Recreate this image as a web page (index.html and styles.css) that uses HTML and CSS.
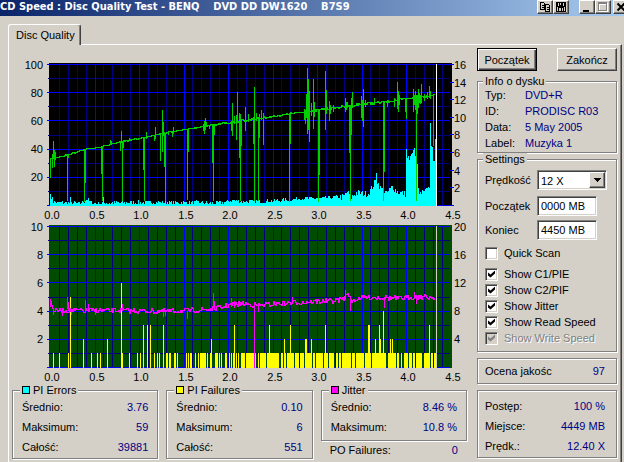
FILE: index.html
```
<!DOCTYPE html>
<html lang="pl">
  <head>
    <meta charset="utf-8">
    <title>CD Speed : Disc Quality Test</title>
    <link rel="stylesheet" href="styles.css">
  </head>
  <body>
    <header class="titlebar">
      <h1 class="title">CD Speed : Disc Quality Test - BENQ    DVD DD DW1620    B7S9</h1>
      <div class="title-buttons">
        <button class="title-button" aria-label="Copy">
          <svg width="12" height="10" viewBox="0 0 12 10" shape-rendering="crispEdges">
            <path d="M1.500 .5h3l1 1v6h-4zM6.500 2.500h3l1 1v6h-4zM3 3.500h2M3 5.500h2M8 5.500h2M8 7.500h2" fill="none" stroke="#000"/>
          </svg>
        </button>
        <button class="title-button" aria-label="Save">
          <svg width="12" height="10" viewBox="0 0 12 10" shape-rendering="crispEdges">
            <path d="M1 0h9l1 1v9H1z"/>
            <path d="M3 1h1v3H3zM8 1h1v3H8zM2 5h1v4H2zM9 5h1v4H9zM4 6h2v3H4zM7 6h1v3H7zM5 1h1v2H5z" fill="#d4d0c8"/>
          </svg>
        </button>
        <button class="title-button window-first" aria-label="Minimize">
          <svg width="12" height="10" viewBox="0 0 12 10" shape-rendering="crispEdges"><path d="M2 8h6v2H2z"/></svg>
        </button>
        <button class="title-button" aria-label="Maximize" disabled>
          <svg width="12" height="10" viewBox="0 0 12 10" shape-rendering="crispEdges">
            <path d="M2.500 1.500h8v8h-8zM2 2.500h9" fill="none" stroke="#fff"/>
            <path d="M1.500 .5h8v8h-8zM1 1.500h9" fill="none" stroke="#808080"/>
          </svg>
        </button>
        <button class="title-button window-close" aria-label="Close">
          <svg width="12" height="10" viewBox="0 0 12 10"><path d="M2.500 1.500l7 7M9.500 1.500l-7 7" stroke="#000" stroke-width="2"/></svg>
        </button>
      </div>
    </header>

    <div class="tabs" role="tablist">
      <button class="tab" role="tab" aria-selected="true">Disc Quality</button>
    </div>

    <main class="panel">
      <section class="results">
        <svg class="chart" id="speed-chart" viewBox="12 58 455 163" role="img" aria-label="PI errors and read speed"></svg>
        <svg class="chart" id="jitter-chart" viewBox="12 221 455 163" role="img" aria-label="PI failures and jitter"></svg>

        <div class="totals">
          <fieldset class="group">
            <legend><i class="swatch errors"></i>PI Errors</legend>
            <dl class="rows">
              <div><dt>Średnio:</dt><dd>3.76</dd></div>
              <div><dt>Maksimum:</dt><dd>59</dd></div>
              <div><dt>Całość:</dt><dd>39881</dd></div>
            </dl>
          </fieldset>
          <fieldset class="group">
            <legend><i class="swatch failures"></i>PI Failures</legend>
            <dl class="rows">
              <div><dt>Średnio:</dt><dd>0.10</dd></div>
              <div><dt>Maksimum:</dt><dd>6</dd></div>
              <div><dt>Całość:</dt><dd>551</dd></div>
            </dl>
          </fieldset>
          <div>
            <fieldset class="group jitter-group">
              <legend><i class="swatch jitter"></i>Jitter</legend>
              <dl class="rows">
                <div><dt>Średnio:</dt><dd>8.46 %</dd></div>
                <div><dt>Maksimum:</dt><dd>10.8 %</dd></div>
              </dl>
            </fieldset>
            <dl class="rows po-failures">
              <div><dt>PO Failures:</dt><dd>0</dd></div>
            </dl>
          </div>
        </div>
      </section>

      <aside class="side">
        <div class="actions">
          <button class="button default">Początek</button>
          <button class="button">Zakończ</button>
        </div>

        <fieldset class="group info">
          <legend>Info o dysku</legend>
          <dl>
            <dt>Typ:</dt><dd>DVD+R</dd>
            <dt>ID:</dt><dd>PRODISC R03</dd>
            <dt>Data:</dt><dd>5 May 2005</dd>
            <dt>Label:</dt><dd>Muzyka 1</dd>
          </dl>
        </fieldset>

        <fieldset class="group settings">
          <legend>Settings</legend>
          <div class="field">
            <label for="speed">Prędkość</label>
            <div class="select">
              <select id="speed"><option>12 X</option></select>
              <span class="arrow"><svg width="7" height="4" viewBox="0 0 7 4" shape-rendering="crispEdges"><path d="M0 0h7v1H0zM1 1h5v1H1zM2 2h3v1H2zM3 3h1v1H3z"/></svg></span>
            </div>
          </div>
          <div class="field">
            <label for="start">Początek</label>
            <input class="text" id="start" type="text" value="0000 MB">
          </div>
          <div class="field">
            <label for="end">Koniec</label>
            <input class="text" id="end" type="text" value="4450 MB">
          </div>
          <label class="check quick"><input type="checkbox">Quick Scan</label>
          <label class="check"><input type="checkbox" checked>Show C1/PIE</label>
          <label class="check"><input type="checkbox" checked>Show C2/PIF</label>
          <label class="check"><input type="checkbox" checked>Show Jitter</label>
          <label class="check"><input type="checkbox" checked>Show Read Speed</label>
          <label class="check disabled"><input type="checkbox" checked disabled>Show Write Speed</label>
        </fieldset>

        <dl class="group rows score">
          <div><dt>Ocena jakośc</dt><dd>97</dd></div>
        </dl>

        <dl class="group rows progress">
          <div><dt>Postęp:</dt><dd>100 %</dd></div>
          <div><dt>Miejsce:</dt><dd>4449 MB</dd></div>
          <div><dt>Prędk.:</dt><dd>12.40 X</dd></div>
        </dl>
      </aside>
    </main>
    <script src="charts.js"></script>
  </body>
</html>
```
FILE: styles.css
```
* {
  box-sizing: border-box;
}

body {
  background: #d4d0c8;
  color: #000;
  display: flex;
  flex-direction: column;
  font-family: "Liberation Sans", Arial, sans-serif;
  font-size: 11px;
  line-height: 16px;
  margin: 0;
  min-height: 100vh;
  overflow-x: hidden;
}

button,
input,
select {
  color: inherit;
  font: inherit;
  margin: 0;
}

dl,
dt,
dd {
  margin: 0;
}

dd {
  color: #000080;
}

/* Title bar */

.titlebar {
  background: linear-gradient(to right, #0a246a, #a6caf0);
  display: flex;
  height: 16px;
  justify-content: space-between;
  overflow: hidden;
}

.title {
  color: #fff;
  font-family: "DejaVu Sans Condensed", "DejaVu Sans", sans-serif;
  font-size: 11px;
  font-weight: bold;
  line-height: 14px;
  margin: 0;
  white-space: pre;
}

.title-buttons {
  display: flex;
  margin-right: -5px;
}

.title-button {
  background: #d4d0c8;
  border: 1px solid;
  border-color: #fff #404040 #404040 #fff;
  box-shadow: inset -1px -1px #808080;
  height: 14px;
  padding: 1px;
  width: 16px;
}

.title-button svg {
  display: block;
}

.window-first {
  margin-left: 10px;
}

.window-close {
  margin-left: 2px;
}

/* Tab and panel */

.tabs {
  margin: 8px 0 0 8px;
}

.tab {
  background: #d4d0c8;
  border: 1px solid #fff;
  border-bottom: none;
  border-radius: 3px 3px 0 0;
  border-right-color: #404040;
  box-shadow: inset -1px 0 #808080;
  display: block;
  height: 21px;
  margin-bottom: -1px;
  padding: 0 5px 0 7px;
  position: relative;
}

.panel {
  border-left: 1px solid #fff;
  border-right: 1px solid #404040;
  border-top: 1px solid #fff;
  box-shadow: inset -1px 0 #808080;
  display: grid;
  flex: 1;
  gap: 10px;
  grid-template-columns: 1fr 140px;
  margin: 0 2px 0 8px;
  padding: 3px 4px 0 3px;
}

.results {
  padding-top: 10px;
}

.chart {
  display: block;
  width: 100%;
}

.middle {
  text-anchor: middle;
}

.end {
  text-anchor: end;
}

/* Etched frames */

.group {
  border: 1px solid #808080;
  box-shadow: 1px 1px #fff, inset 1px 1px #fff;
  margin: 0;
  min-width: 0;
  padding: 0 9px 1px;
}

.group legend {
  background: #d4d0c8;
  line-height: 12px;
  margin-left: -2px;
  padding: 0 2px;
}

.rows > div {
  display: flex;
  justify-content: space-between;
  line-height: 20px;
}

.totals {
  display: grid;
  gap: 8px;
  grid-template-columns: repeat(3, 1fr);
}

.swatch {
  border: 1px solid #000;
  display: inline-block;
  height: 8px;
  margin-right: 3px;
  width: 8px;
}

.errors {
  background: #0ff;
}

.failures {
  background: #ff0;
}

.jitter {
  background: #f0f;
}

.totals .rows {
  padding-top: 1px;
}

.totals .jitter-group {
  padding-bottom: 3px;
}

.totals .po-failures {
  padding: 0 9px;
}

.po-failures > div {
  line-height: 18px;
}

/* Right column */

.actions {
  display: flex;
  justify-content: space-between;
  margin-bottom: 4px;
}

.button {
  background: #d4d0c8;
  border: 1px solid;
  border-color: #fff #404040 #404040 #fff;
  box-shadow: inset -1px -1px #808080;
  height: 23px;
  padding: 0;
  width: 60px;
}

.button.default {
  border-color: #000;
  box-shadow: inset 1px 1px #fff, inset -1px -1px #404040, inset -2px -2px #808080;
}

.side .group {
  padding-left: 7px;
}

.info dl {
  display: grid;
  grid-template-columns: 40px 1fr;
}

.side .settings {
  padding-bottom: 5px;
  padding-top: 5px;
}

.field {
  display: grid;
  grid-template-columns: 52px 1fr;
  line-height: 20px;
  margin-bottom: 4px;
}

.text,
.select {
  background: #fff;
  border: 1px solid;
  border-color: #808080 #fff #fff #808080;
  box-shadow: inset 1px 1px #404040, inset -1px -1px #d4d0c8;
  height: 20px;
}

.text {
  padding: 0 3px;
  width: 60px;
}

.select {
  margin-bottom: 2px;
  position: relative;
  width: 70px;
}

.select select {
  appearance: none;
  background: none;
  border: none;
  display: block;
  height: 18px;
  padding: 0 3px;
  width: 100%;
}

.arrow {
  align-items: center;
  background: #d4d0c8;
  border: 1px solid;
  border-color: #fff #404040 #404040 #fff;
  bottom: 1px;
  box-shadow: inset -1px -1px #808080;
  display: flex;
  justify-content: center;
  pointer-events: none;
  position: absolute;
  right: 1px;
  top: 1px;
  width: 16px;
}

.check {
  align-items: center;
  display: flex;
  gap: 6px;
  height: 16px;
  white-space: nowrap;
}

.quick {
  margin: 5px 0;
}

.check input {
  appearance: none;
  background: #fff;
  border: 1px solid;
  border-color: #808080 #fff #fff #808080;
  box-shadow: inset 1px 1px #404040, inset -1px -1px #d4d0c8;
  display: grid;
  height: 13px;
  place-items: center;
  width: 13px;
}

.check input:checked::after {
  background: #000;
  clip-path: polygon(0 29%, 36% 58%, 100% 0, 100% 43%, 36% 100%, 0 72%);
  content: "";
  height: 7px;
  width: 7px;
}

.disabled {
  color: #808080;
  text-shadow: 1px 1px #fff;
}

.check input:disabled {
  background: #d4d0c8;
}

.check input:disabled::after {
  background: #808080;
}

.side .score {
  margin-top: 6px;
  padding-bottom: 2px;
  padding-right: 11px;
  padding-top: 2px;
}

.side .progress {
  margin-top: 6px;
  padding-right: 11px;
  padding-top: 5px;
}
```
FILE: charts.js
```
var NS = 'http://www.w3.org/2000/svg';
var LEFT = 50;
var STEP = 8.9;

// Small repeatable generator so that the traces look the same on every load.
var seed = 7;
function random() {
  seed = (seed * 16807) % 2147483647;
  return seed / 2147483647;
}

function add(svg, name, attrs, text) {
  var el = document.createElementNS(NS, name);
  for (var key in attrs) {
    el.setAttribute(key, attrs[key]);
  }
  if (text !== undefined) {
    el.textContent = text;
  }
  svg.appendChild(el);
}

function path(svg, d, color) {
  add(svg, 'path', {d: d, stroke: color, fill: 'none', 'shape-rendering': 'crispEdges'});
}

function grid(svg, top, fill, minor) {
  var i, x, y, dark = '', bright = '';
  add(svg, 'rect', {x: 49, y: top - 1, width: 403, height: 143, fill: fill});
  for (i = 0; i <= 45; i++) {
    x = Math.round(LEFT + i * STEP) + 0.5;
    if (i % 5) {
      dark += 'M' + x + ' ' + top + 'v142';
    } else if (i > 0 && i < 45) {
      bright += 'M' + x + ' ' + top + 'v142';
    }
  }
  for (i = 0; i <= 10; i++) {
    y = top + Math.round(i * 14.1) + 0.5;
    if (i % 2) {
      dark += 'M48 ' + y + 'H450';
    } else {
      bright += 'M47 ' + y + 'H450';
    }
  }
  path(svg, dark, minor);
  path(svg, bright, '#0000ff');
  for (i = 0; i <= 9; i++) {
    add(svg, 'text', {x: Math.round(52 + i * 5 * STEP), y: top + 155, 'class': 'middle'}, (i / 2).toFixed(1));
  }
}

// Linear interpolation between [x, y] points.
function level(points, x) {
  for (var i = 1; i < points.length; i++) {
    if (x <= points[i][0]) {
      var a = points[i - 1], b = points[i];
      return a[1] + (b[1] - a[1]) * (x - a[0]) / (b[0] - a[0]);
    }
  }
  return points[points.length - 1][1];
}

function trace(points, from, to, noise) {
  var d = '', last = Math.round(level(points, from));
  for (var x = from; x <= to; x++) {
    var y = Math.round(level(points, x) + (random() - 0.5) * noise(x));
    d += 'M' + (x + 0.5) + ' ' + Math.min(last, y) + 'V' + (Math.max(last, y) + 1);
    last = y;
  }
  return d;
}

function spikes(list) {
  return list.map(function(s) {
    return 'M' + (s[0] + 0.5) + ' ' + s[1] + 'V' + s[2];
  }).join('');
}

// PI errors and read speed
var speed = document.getElementById('speed-chart');
grid(speed, 64, '#000000', '#000080');

var errors = [
  [50, 6], [54, 4], [80, 3], [87, 7], [92, 3], [130, 4], [170, 4], [200, 4], [215, 3], [234, 6],
  [240, 5], [260, 5], [280, 6], [300, 8], [320, 8], [343, 10], [347, 15], [351, 9], [356, 14],
  [368, 13], [373, 22], [376, 27], [380, 19], [386, 13], [392, 20], [397, 15], [405, 13]
];
var late = [57, 53, 48, 50, 46, 50, 52, 53, 52, 56, 58, 50, 46, 42, 18, 15, 12, 14, 12, 16, 15, 14,
  15, 17, 18, 18, 19, 18, 83, 62, 60, 59, 45, 45, 67, 64];
var bars = '', x;
for (x = 50; x < 406; x++) {
  var h = Math.max(2, Math.round(level(errors, x) + (random() - 0.6) * (x < 340 ? 4 : 7)));
  bars += 'M' + (x + 0.5) + ' 206v-' + h;
}
late.forEach(function(h, i) {
  bars += 'M' + (Math.floor(406 + i * 30 / 35) + 0.5) + ' 206v-' + h;
});
bars += 'M50.5 206v-12M52.5 206v-9M70.5 206v-9M103.5 206v-9M376.500 206v-33';
path(speed, bars, '#00ffff');

var curve = [
  [50, 158], [60, 156], [68, 154], [85, 149], [102, 146], [122, 141], [139, 138], [160, 133],
  [185, 129], [211, 125], [236, 121], [257, 118], [272, 116], [290, 113], [310, 111], [320, 109],
  [345, 106], [357, 104], [380, 102], [400, 99], [415, 97], [430, 95], [434, 94]
];
path(speed, trace(curve, 50, 434, function(x) { return x < 200 ? 1 : 2; }) + spikes([
  [50, 158, 178], [52, 154, 168], [53, 141, 158], [54, 150, 167], [55, 152, 160], [67, 154, 201],
  [68, 154, 158], [84, 149, 202], [85, 149, 183], [101, 146, 174], [102, 146, 201], [110, 140, 145],
  [111, 141, 144], [120, 141, 151], [121, 131, 142], [122, 141, 201], [123, 141, 148], [129, 138, 141],
  [143, 138, 170], [144, 138, 201], [146, 132, 139], [154, 135, 141], [155, 127, 139], [160, 133, 161],
  [162, 110, 152], [163, 122, 136], [164, 133, 167], [165, 133, 201], [168, 131, 135], [172, 131, 137],
  [173, 127, 134], [187, 129, 200], [188, 129, 152], [203, 124, 131], [204, 121, 134], [205, 118, 130],
  [206, 122, 127], [209, 125, 129], [212, 125, 163], [213, 125, 201], [214, 125, 135], [231, 121, 131],
  [232, 103, 136], [234, 116, 124], [236, 115, 140], [237, 92, 122], [239, 113, 158], [240, 114, 201],
  [241, 119, 146], [245, 107, 131], [248, 114, 122], [253, 117, 144], [254, 87, 201], [256, 113, 121],
  [258, 117, 201], [259, 114, 138], [261, 110, 120], [263, 113, 145], [289, 113, 202], [290, 113, 144],
  [304, 109, 120], [305, 110, 124], [306, 94, 118], [307, 68, 134], [308, 79, 130], [309, 91, 142],
  [311, 103, 116], [313, 79, 129], [314, 102, 117], [318, 109, 202], [319, 109, 175], [325, 71, 130],
  [326, 90, 114], [329, 101, 121], [330, 105, 114], [333, 105, 112], [345, 98, 112], [346, 102, 110],
  [347, 102, 108], [349, 105, 153], [350, 105, 201], [351, 98, 135], [352, 92, 108], [361, 96, 118],
  [362, 100, 121], [363, 89, 127], [365, 100, 107], [374, 98, 105], [383, 101, 201], [384, 101, 172],
  [387, 100, 107], [394, 98, 107], [397, 82, 109], [398, 91, 112], [399, 95, 105], [405, 98, 112],
  [406, 98, 119], [413, 89, 112], [414, 95, 105], [415, 91, 110], [416, 95, 201], [417, 95, 114],
  [418, 89, 108], [419, 93, 103], [420, 95, 104], [421, 84, 103], [424, 94, 101], [427, 92, 99],
  [429, 86, 98], [430, 91, 99], [433, 95, 146]
]), '#00d000');
path(speed, 'M436.5 64V206', '#ffffff');

[100, 80, 60, 40, 20].forEach(function(n, i) {
  add(speed, 'text', {x: 43, y: 69 + i * 28, 'class': 'end'}, n);
});
[16, 14, 12, 10, 8, 6, 4, 2].forEach(function(n, i) {
  var y = 64 + Math.round(i * 17.6);
  path(speed, 'M450 ' + (y + 0.5) + 'h4', '#0000ff');
  add(speed, 'text', {x: 454, y: y + 5}, n);
});
path(speed, 'M450 205.5h4', '#0000ff');

// PI failures and jitter
var jitter = document.getElementById('jitter-chart');
grid(jitter, 226, '#004c00', '#000080');

var ones = [
  53, 59, 68, 91, 97, 100, 122, 129, 137, 140, 154, 157, 159, 166, 167, 169, 170, 174, 175, 177,
  186, 188, 190, 191, 195, 198, 200, 201, 202, 203, 204, 205, 207, 210, 215, 216, 217, 219, 221,
  225, 226, 229, 231, 233, 236, 238
];
var gaps = [
  240, 245, 254, 256, 257, 259, 266, 279, 280, 283, 286, 294, 299, 304, 312, 315, 323, 328, 334,
  335, 338, 341, 351, 355, 364, 371, 386, 387, 396, 399, 400, 402, 403, 408, 412, 415, 422, 423,
  430, 433
];
for (x = 241; x < 436; x++) {
  if (gaps.indexOf(x) < 0) {
    ones.push(x);
  }
}
var tall = [
  [70, 5], [83, 2], [107, 2], [121, 6], [143, 3], [147, 3], [150, 3], [163, 3], [211, 2], [234, 3],
  [269, 3], [284, 2], [290, 3], [305, 2], [306, 2], [311, 2], [325, 3], [368, 3], [369, 3],
  [375, 2], [379, 3], [380, 2], [383, 4], [390, 2], [392, 2], [429, 3]
];
path(jitter, ones.map(function(x) {
  return 'M' + (x + 0.5) + ' 353V368';
}).join('') + tall.map(function(t) {
  return 'M' + (t[0] + 0.5) + ' 368V' + Math.round(367 - t[1] * 14);
}).join(''), '#ffff00');

var jitterLevel = [
  [50, 301], [53, 310], [85, 310], [120, 310], [160, 311], [190, 310], [208, 309], [220, 307],
  [226, 305], [240, 303], [258, 305], [280, 303], [295, 302], [315, 301], [335, 300], [344, 298],
  [346, 292], [348, 294], [350, 301], [360, 297], [380, 297], [400, 298], [415, 296], [434, 297]
];
path(jitter, trace(jitterLevel, 50, 434, function() { return 5; }) + spikes([
  [50, 299, 307], [53, 308, 315], [62, 311, 316], [67, 297, 309], [68, 302, 311], [71, 310, 315],
  [85, 300, 310], [88, 304, 310], [95, 309, 315], [122, 304, 311], [163, 310, 317], [165, 310, 316],
  [187, 311, 319], [213, 293, 308], [214, 301, 309], [231, 298, 307], [234, 301, 308],
  [254, 306, 368], [258, 304, 312], [292, 297, 304], [345, 290, 300], [350, 299, 311],
  [384, 297, 308], [414, 292, 299], [416, 295, 304]
]), '#ff00ff');
path(jitter, 'M436.5 226V368', '#d4d0c8');

[10, 8, 6, 4, 2].forEach(function(n, i) {
  add(jitter, 'text', {x: 43, y: 231 + i * 28, 'class': 'end'}, n);
  add(jitter, 'text', {x: 454, y: 231 + i * 28}, n * 2);
});
```
